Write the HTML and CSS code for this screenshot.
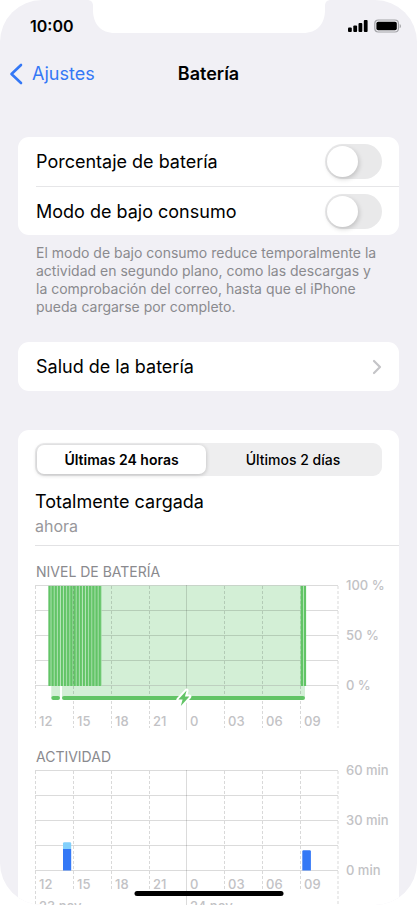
FILE: index.html
```html
<!DOCTYPE html>
<html lang="es">
<head>
<meta charset="utf-8">
<meta name="viewport" content="width=device-width, initial-scale=1">
<title>Batería</title>
<link rel="stylesheet" href="styles.css">
</head>
<body>
<div class="screen">
  <svg class="notch" width="244" height="34" viewBox="0 0 244 34" aria-hidden="true">
    <path d="M0 0C4 0 6 2 6 6V10C6 24 14 33 28 33H216C230 33 238 24 238 10V6C238 2 240 0 244 0Z" fill="#fff"/>
  </svg>

  <div class="status">
    <span class="clock">10:00</span>
    <span class="status-icons">
      <svg width="20" height="14" viewBox="0 0 20 14" aria-hidden="true">
        <rect x="0" y="8.500" width="3.800" height="4.500" rx="1"/>
        <rect x="5.300" y="6.500" width="3.800" height="6.500" rx="1"/>
        <rect x="10.500" y="4" width="3.800" height="9" rx="1"/>
        <rect x="15.800" y="1" width="3.800" height="12" rx="1"/>
      </svg>
      <svg width="28" height="14" viewBox="0 0 28 14" aria-hidden="true">
        <rect x=".8" y="1" width="23.600" height="12" rx="3.500" fill="none" stroke="#a3a3a7" stroke-width="1.200"/>
        <rect x="2.400" y="2.700" width="20.400" height="8.600" rx="1.800"/>
        <path d="M25.700 5V9.300C27.400 8.600 27.400 5.700 25.700 5Z" fill="#a3a3a7"/>
      </svg>
    </span>
  </div>

  <header class="nav">
    <a class="back" href="#">
      <svg width="14" height="22" viewBox="0 0 14 22" aria-hidden="true"><path d="M12 2L2.500 11L12 20" fill="none" stroke="#3478f6" stroke-width="2.600" stroke-linecap="round" stroke-linejoin="round"/></svg>
      <span>Ajustes</span>
    </a>
    <h1>Batería</h1>
  </header>

  <main>
    <section class="card">
      <div class="row">
        <label for="percent">Porcentaje de batería</label>
        <input class="switch" type="checkbox" role="switch" id="percent">
      </div>
      <div class="row">
        <label for="lowpower">Modo de bajo consumo</label>
        <input class="switch" type="checkbox" role="switch" id="lowpower">
      </div>
    </section>
    <p class="note">El modo de bajo consumo reduce temporalmente la actividad en segundo plano, como las descargas y la comprobación del correo, hasta que el iPhone pueda cargarse por completo.</p>

    <section class="card health">
      <a class="row" href="#">
        <span>Salud de la batería</span>
        <svg width="10" height="16" viewBox="0 0 10 16" aria-hidden="true"><path d="M2 2L8 8L2 14" fill="none" stroke="#c4c4c7" stroke-width="2.200" stroke-linecap="round" stroke-linejoin="round"/></svg>
      </a>
    </section>

    <section class="card usage">
      <div class="segments">
        <button type="button" class="selected" aria-pressed="true">Últimas 24 horas</button>
        <button type="button" aria-pressed="false">Últimos 2 días</button>
      </div>
      <div class="charge">
        <p class="charge-state">Totalmente cargada</p>
        <p class="charge-time">ahora</p>
      </div>

      <h2>NIVEL DE BATERÍA</h2>
      <svg class="chart" viewBox="0 0 364 151" role="img" aria-label="Nivel de batería">
        <defs>
          <pattern id="bars" x="13.300" y="0" width="3.140" height="10" patternUnits="userSpaceOnUse">
            <rect width="3.140" height="10" fill="#b9e7bd"/>
            <rect width="2.250" height="10" fill="#62c466"/>
          </pattern>
        </defs>
        <path class="shade" d="M13.300 5.500H271V105.500H13.300Z"/>
        <path class="shade" d="M16.300 105.500H25V118H16.300ZM27 105.500H270V118H27Z"/>
        <path class="grid" d="M0 5.500H303M0 30.500H303M0 55.500H303M0 80.500H303M0 105.500H303"/>
        <path class="grid" d="M151.500 5V150"/>
        <rect x="13.300" y="6" width="53.380" height="100" fill="url(#bars)"/>
        <path class="dash" d="M.5 6V148M38.500 6V148M76.500 6V148M114.500 6V148M189.500 6V148M227.500 6V148M265.500 6V148M303 6V148"/>
        <path d="M265.700 6H271V106H265.700Z" fill="#b9e7bd"/>
        <path d="M265.700 6H268V106H265.700ZM268.900 6H271.100V106H268.900Z" fill="#62c466"/>
        <path d="M18.300 118H23M29 118H268" stroke="#62c466" stroke-width="4" stroke-linecap="round"/>
        <path class="bolt" d="M151.600 110.500L143.300 119.500H147.600L145.800 126L154.400 116.600H149.900Z"/>
        <g class="labels">
          <text x="4" y="146">12</text><text x="42" y="146">15</text><text x="80" y="146">18</text><text x="118" y="146">21</text><text x="155" y="146">0</text><text x="193" y="146">03</text><text x="231" y="146">06</text><text x="269" y="146">09</text>
          <text x="311" y="10">100 %</text><text x="311" y="60">50 %</text><text x="311" y="110">0 %</text>
        </g>
      </svg>

      <h2>ACTIVIDAD</h2>
      <svg class="chart" viewBox="0 0 364 170" role="img" aria-label="Actividad">
        <path class="grid" d="M0 5.500H303M0 30.500H303M0 55.500H303M0 80.500H303M0 105.500H303"/>
        <path class="grid" d="M151.500 5V170"/>
        <path class="dash" d="M.5 6V170M38.500 6V126M76.500 6V126M114.500 6V126M189.500 6V126M227.500 6V126M265.500 6V126M303 6V170"/>
        <path d="M28 84V78.500Q28 77.300 29.200 77.300H35Q36.200 77.300 36.200 78.500V84Z" fill="#83d0fb"/>
        <path d="M28 84H36.200V105.500H28Z" fill="#3478f6"/>
        <path d="M267.300 105.500V86.500Q267.300 85.300 268.500 85.300H274.700Q275.900 85.300 275.900 86.500V105.500Z" fill="#3478f6"/>
        <g class="labels">
          <text x="4" y="124">12</text><text x="42" y="124">15</text><text x="80" y="124">18</text><text x="118" y="124">21</text><text x="155" y="124">0</text><text x="193" y="124">03</text><text x="231" y="124">06</text><text x="269" y="124">09</text>
          <text x="4" y="146">23 nov</text><text x="155" y="146">24 nov</text>
          <text x="311" y="10">60 min</text><text x="311" y="60">30 min</text><text x="311" y="110">0 min</text>
        </g>
      </svg>
    </section>
  </main>
  <div class="home-bar"></div>
</div>
</body>
</html>
```
FILE: styles.css
```css
* { box-sizing: border-box; }

body {
  margin: 0;
  background: #fff;
  color: #000;
  font-family: Inter, "Liberation Sans", sans-serif;
  font-size: 18px;
}

h1, h2, p { margin: 0; }
a { color: inherit; text-decoration: none; }

.screen {
  position: relative;
  height: 100vh;
  overflow: hidden;
  background: #f1f0f5;
  border-radius: 42px;
}

.notch {
  position: absolute;
  top: 0;
  left: 50%;
  transform: translateX(-50%);
}

.status {
  display: flex;
  justify-content: space-between;
  align-items: center;
  height: 52px;
  padding: 0 15px 0 30px;
}

.clock { font-size: 16px; font-weight: 600; }
.status-icons { display: flex; gap: 6px; }

.nav {
  display: grid;
  grid-template-columns: 1fr auto 1fr;
  align-items: center;
  height: 43px;
  padding: 0 9px;
}

.back {
  display: flex;
  align-items: center;
  gap: 9px;
  color: #3478f6;
}

.nav h1 { font-size: 18px; font-weight: 600; }

main { padding: 42px 18px 0; }

.card {
  background: #fff;
  border-radius: 11px;
}

.row {
  display: flex;
  align-items: center;
  justify-content: space-between;
  height: 49px;
  margin-left: 18px;
  padding-right: 17px;
}

.row + .row { border-top: 1px solid #e6e6e8; }

.switch {
  appearance: none;
  width: 57px;
  height: 35px;
  margin: 0;
  padding: 2px;
  border-radius: 18px;
  background: #e9e9ea;
}

.switch::before {
  content: "";
  display: block;
  width: 31px;
  height: 31px;
  border-radius: 50%;
  background: #fff;
  box-shadow: 1px 2px 5px rgba(0, 0, 0, 0.18);
}

.switch:checked { background: #62c466; }
.switch:checked::before { margin-left: auto; }

.note {
  padding: 9px 14px 0 18px;
  color: #8a8a8e;
  font-size: 14px;
  line-height: 18px;
}

.health { margin-top: 26px; }
.usage { margin-top: 39px; padding: 13px 0 0 17px; }

.segments {
  display: grid;
  grid-template-columns: 34fr 35fr;
  height: 33px;
  margin-right: 17px;
  padding: 2px;
  border-radius: 9px;
  background: #eeeeef;
}

.segments button {
  border: 0;
  border-radius: 7px;
  padding: 0;
  background: none;
  color: #000;
  font: 500 14px Inter, "Liberation Sans", sans-serif;
}

.segments .selected {
  background: #fff;
  font-weight: 600;
  box-shadow: 0 1px 4px rgba(0, 0, 0, 0.22);
}

.charge {
  height: 70px;
  padding-top: 13px;
  border-bottom: 1px solid #e2e2e4;
}

.charge-state { line-height: 25px; }
.charge-time { color: #98989b; font-size: 16px; line-height: 24px; }

.usage h2 {
  padding: 18px 0 0 1px;
  color: #8a8a8e;
  font-size: 14px;
  font-weight: 400;
  line-height: 16px;
}

.chart { display: block; width: 100%; overflow: visible; }
.shade { fill: #d3efd6; }
.grid { fill: none; stroke: #000; stroke-opacity: 0.14; }
.dash { fill: none; stroke: #000; stroke-opacity: 0.15; stroke-dasharray: 3 2; }

.bolt {
  fill: #62c466;
  stroke: #fff;
  stroke-width: 4px;
  stroke-linejoin: round;
  paint-order: stroke;
}

.labels { fill: #c2c2c5; font-size: 13px; font-weight: 500; }

.home-bar {
  position: absolute;
  bottom: 9px;
  left: 50%;
  width: 149px;
  height: 5px;
  border-radius: 3px;
  background: #000;
  transform: translateX(-50%);
}
```
